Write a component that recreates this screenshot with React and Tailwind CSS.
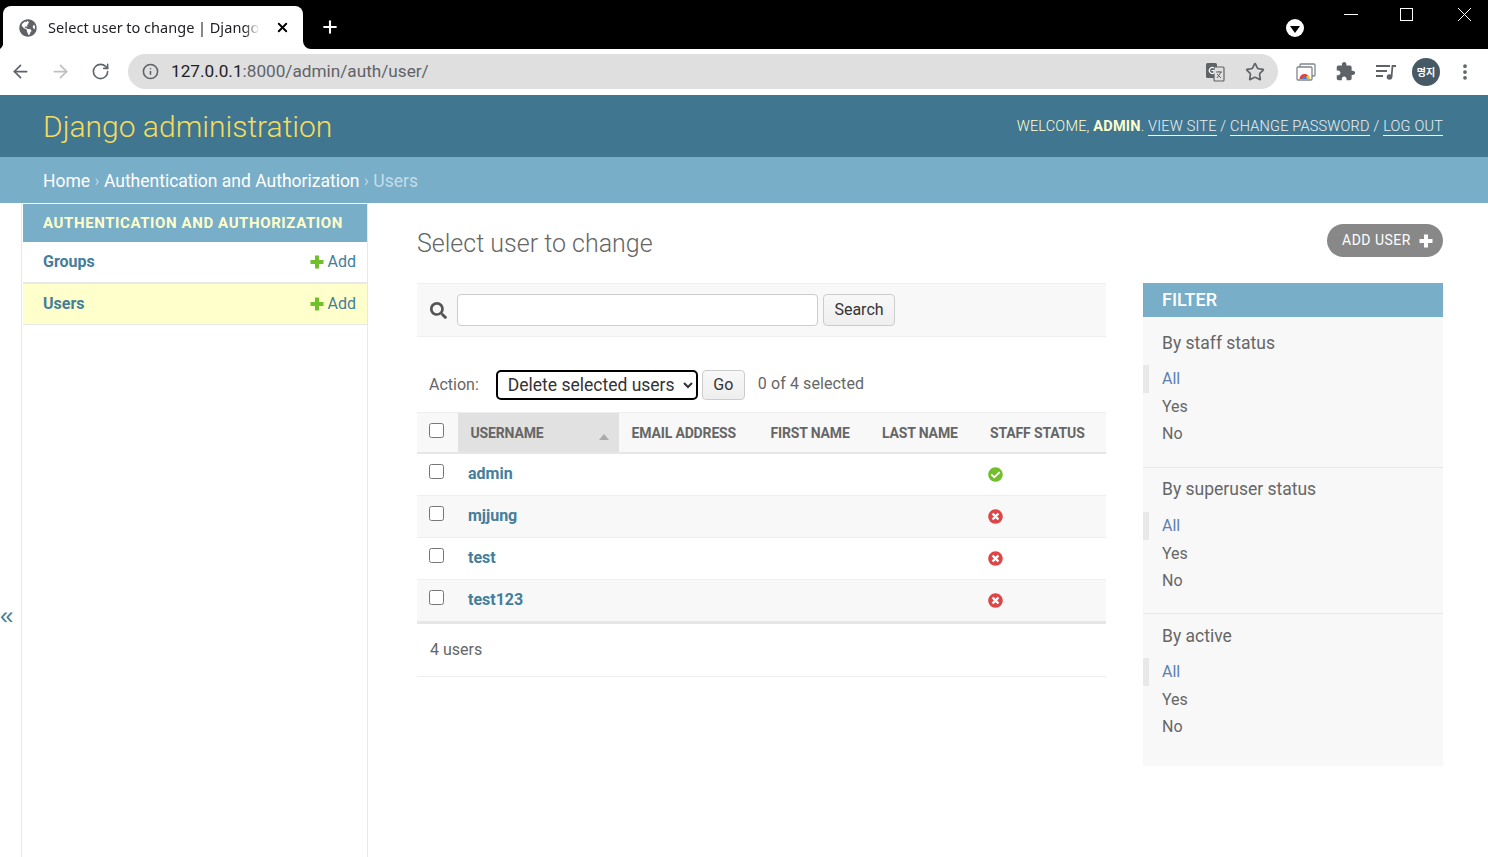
import { ArrowLeft, ArrowRight, RotateCw, Info, Star, EllipsisVertical, X, Plus } from "lucide-react";
import { FaGlobeAmericas, FaSearch, FaCheckCircle, FaTimesCircle } from "react-icons/fa";

const users = [
  { name: "admin", staff: true },
  { name: "mjjung", staff: false },
  { name: "test", staff: false },
  { name: "test123", staff: false },
];

const filters = [
  { title: "By staff status", box: "h-[151px] border-b border-[#e8e8e8]", pt: "pt-[14px]", mt: "mt-[10px]" },
  { title: "By superuser status", box: "h-[146px] border-b border-[#e8e8e8]", pt: "pt-[9px]", mt: "mt-[11px]" },
  { title: "By active", box: "h-[152px]", pt: "pt-[10px]", mt: "mt-[10px]" },
];

function Cross({ className }) {
  return (
    <svg viewBox="0 0 14 14" className={className}>
      <path d="M5 0.500h4V5h4.500v4H9v4.500H5V9H0.500V5H5z" fill="currentColor" />
    </svg>
  );
}

function BrowserBar() {
  return (
    <div className="font-['Noto_Sans','Open_Sans',sans-serif]">
      <div className="h-[49px] bg-black flex items-end pl-[3px]">
        <div className="w-[300px] h-[43px] bg-white rounded-t-lg flex items-center pl-4 pr-[13px] relative">
          <svg viewBox="0 0 3 8" className="absolute right-full bottom-0 w-[3px] h-[8px]"><path d="M3 0A8 8 0 0 1 0 8H3z" fill="#fff" /></svg>
          <svg viewBox="0 0 8 8" className="absolute left-full bottom-0 w-[8px] h-[8px]"><path d="M0 0A8 8 0 0 0 8 8H0z" fill="#fff" /></svg>
          <FaGlobeAmericas className="w-[18px] h-[18px] text-[#5f6368] shrink-0" />
          <span className="ml-[11px] w-[218px] overflow-hidden whitespace-nowrap text-[14.5px] tracking-[0.1px] [word-spacing:-0.4px] text-[#202124] [mask-image:linear-gradient(to_right,black_90%,transparent_97%)]">
            Select user to change | Django site admin
          </span>
          <X className="ml-auto w-[15px] h-[15px] text-black" strokeWidth={3} />
        </div>
        <Plus className="ml-[17px] mb-[12px] w-[20px] h-[20px] text-white" strokeWidth={2.5} />
        <div className="ml-auto self-stretch flex items-start pr-[17px]">
          <div className="mt-[19px] w-[18px] h-[18px] rounded-full bg-white flex items-center justify-center">
            <svg viewBox="0 0 10 7" className="w-[10px] h-[7px] mt-[2px]"><path d="M0 0h10L5 7z" fill="#000" /></svg>
          </div>
          <svg viewBox="0 0 14 1" className="ml-[40px] mt-[14px] w-[14px] h-px"><path d="M0 .5h14" stroke="#fff" /></svg>
          <svg viewBox="0 0 13 13" className="ml-[42px] mt-[8px] w-[13px] h-[13px]"><rect x=".5" y=".5" width="12" height="12" fill="none" stroke="#fff" /></svg>
          <svg viewBox="0 0 13 13" className="ml-[45px] mt-[8px] w-[13px] h-[13px]"><path d="M0 0l13 13M13 0L0 13" stroke="#fff" /></svg>
        </div>
      </div>
      <div className="h-[46px] bg-white flex items-center pb-px">
        <ArrowLeft className="ml-[10px] w-[21px] h-[21px] text-[#5f6368]" strokeWidth={2} />
        <ArrowRight className="ml-[19px] w-[21px] h-[21px] text-[#bdbfc2]" strokeWidth={2} />
        <RotateCw className="ml-[20px] w-[19px] h-[19px] text-[#5f6368]" strokeWidth={2} />
        <div className="ml-[18px] w-[1150px] h-[35px] rounded-full bg-[#dfdfdf] flex items-center pl-[14px] pr-[13px]">
          <Info className="w-[17px] h-[17px] text-[#5f6368]" strokeWidth={2.2} />
          <span className="ml-[12px] text-[17.2px] font-['Roboto',sans-serif] text-[#5f6368]">
            <span className="text-[#202124]">127.0.0.1</span>:8000/admin/auth/user/
          </span>
          <svg viewBox="0 0 20 20" className="ml-auto w-[20px] h-[20px]">
            <rect x="1" y="1" width="11" height="15" rx="1.5" fill="#5f6368" />
            <rect x="9" y="5" width="10" height="14" rx="1" fill="#dfdfdf" stroke="#5f6368" strokeWidth="1.2" />
            <path d="M11 10h6M14 9v1M12 16l4-6M12 12l4 4" stroke="#5f6368" strokeWidth="1" fill="none" />
            <path d="M9 6a3 3 0 1 0 0 5V8.500H6.500" stroke="#fff" strokeWidth="1.200" fill="none" />
          </svg>
          <Star className="ml-[20px] w-[20px] h-[20px] text-[#5f6368]" strokeWidth={2} />
        </div>
        <svg viewBox="0 0 20 20" className="ml-[18px] w-[20px] h-[20px]">
          <rect x="4" y="2" width="15" height="12" rx="1" fill="none" stroke="#80868b" strokeWidth="1.3" />
          <rect x="1" y="5" width="15" height="13" rx="1" fill="#fff" stroke="#80868b" strokeWidth="1.3" />
          <path d="M3.500 17a5 5 0 0 1 10 0z" fill="#e0413a" />
          <path d="M6 17a2.500 2.500 0 0 1 5 0z" fill="#3f83ea" />
          <path d="M11 17a3 3 0 0 0-1-2l2-2a5 5 0 0 1 1.500 4z" fill="#f3c02c" />
        </svg>
        <svg viewBox="0 0 24 24" className="ml-[19px] w-[21px] h-[21px]">
          <path d="M20.500 11H19V7c0-1.100-.9-2-2-2h-4V3.500C13 2.120 11.880 1 10.500 1S8 2.120 8 3.500V5H4c-1.100 0-1.990.9-1.990 2v3.800H3.500c1.490 0 2.700 1.210 2.700 2.700s-1.210 2.700-2.700 2.700H2V20c0 1.100.9 2 2 2h3.800v-1.500c0-1.490 1.210-2.700 2.700-2.700 1.490 0 2.700 1.210 2.700 2.700V22H17c1.100 0 2-.9 2-2v-4h1.500c1.380 0 2.500-1.120 2.500-2.500S21.880 11 20.500 11z" fill="#5f6368" />
        </svg>
        <svg viewBox="0 0 22 18" className="ml-[19px] w-[22px] h-[18px]">
          <path d="M1 3h14M1 8h11M1 13h7" stroke="#5f6368" strokeWidth="1.800" fill="none" />
          <circle cx="14.500" cy="14" r="2.800" fill="#5f6368" />
          <path d="M16.500 14L17.500 3H21" stroke="#5f6368" strokeWidth="1.800" fill="none" />
        </svg>
        <div className="ml-[15px] w-[28px] h-[28px] rounded-full bg-[#455a64] flex items-center justify-center text-[10px] font-bold text-white font-['Noto_Sans_CJK_KR',sans-serif]">
          명지
        </div>
        <EllipsisVertical className="ml-[15px] w-[20px] h-[20px] text-[#5f6368]" strokeWidth={2.5} />
      </div>
    </div>
  );
}

function Sidebar() {
  return (
    <div className="flex shrink-0 self-stretch">
      <div className="w-[22px] border-r border-[#e8e8e8] pt-[401px] text-[#447e9b] text-[24px] leading-[24px]">
        <span className="font-['Liberation_Sans',sans-serif]">«</span>
      </div>
      <div className="w-[346px] border-r border-[#e8e8e8] pt-px pl-px">
        <div className="h-[38px] bg-[#79aec8] pl-5 flex items-center text-[15px] font-bold tracking-[0.6px] text-[#ffffcc]">
          AUTHENTICATION AND AUTHORIZATION
        </div>
        <div className="h-[41px] flex items-center justify-between pl-5 pr-[11px] border-b border-[#e8e8e8] text-[16px]">
          <span className="font-bold text-[#447e9b]">Groups</span>
          <span className="flex items-center gap-[4px] text-[#447e9b]"><Cross className="w-[14px] h-[14px] text-[#70bf2b]" />Add</span>
        </div>
        <div className="h-[42px] flex items-center justify-between pl-5 pr-[11px] border-y border-[#e8e8e8] bg-[#ffffcc] text-[16px]">
          <span className="font-bold text-[#447e9b]">Users</span>
          <span className="flex items-center gap-[4px] text-[#447e9b]"><Cross className="w-[14px] h-[14px] text-[#70bf2b]" />Add</span>
        </div>
      </div>
    </div>
  );
}

function Changelist() {
  return (
    <div className="w-[689px]">
      <div className="h-[54px] bg-[#f8f8f8] border-y border-[#eeeeee] flex items-center pl-[13px]">
        <FaSearch className="w-[17px] h-[17px] text-[#555555]" />
        <input className="ml-[10px] w-[361px] h-[32px] bg-white border border-[#cccccc] rounded" />
        <button className="ml-[5px] h-[32px] w-[72px] bg-gradient-to-b from-[#f8f8f8] to-[#eeeeee] border border-[#cccccc] rounded text-[16px] text-[#333333]">Search</button>
      </div>
      <div className="h-[75px] pt-[21px] flex items-center pl-[12px] text-[16px] text-[#666666]">
        <span>Action:</span>
        <select className="ml-[17px] w-[202px] h-[30px] bg-white border-2 border-black rounded-[5px] pl-[6px] text-[17.5px] text-[#333333]">
          <option>Delete selected users</option>
        </select>
        <button className="ml-[4px] h-[30px] w-[43px] bg-gradient-to-b from-[#f8f8f8] to-[#eeeeee] border border-[#cccccc] rounded text-[16px] text-[#333333]">Go</button>
        <span className="ml-[13px] mt-[-2px] tracking-[0.1px]">0 of 4 selected</span>
      </div>
      <div className="h-[42px] bg-[#f8f8f8] border-t border-[#eeeeee] border-b-2 border-b-[#e6e6e6] flex items-stretch text-[14px] font-bold tracking-[-0.15px] text-[#666666]">
        <div className="w-[41px] pl-[12px] pt-[10px]"><input type="checkbox" className="block w-[15px] h-[15px]" /></div>
        <div className="w-[161px] bg-[#e1e1e1] pl-[12.500px] pr-[9px] pt-[2px] flex items-center justify-between">
          USERNAME
          <svg viewBox="0 0 10 6" className="w-[12px] h-[6px] mt-[6px]"><path d="M5 0l5 6H0z" fill="#aaaaaa" /></svg>
        </div>
        <div className="w-[139px] pl-[12.500px] pt-[2px] flex items-center">EMAIL ADDRESS</div>
        <div className="w-[112px] pl-[12.500px] pt-[2px] flex items-center">FIRST NAME</div>
        <div className="w-[108px] pl-[12px] pt-[2px] flex items-center">LAST NAME</div>
        <div className="flex-1 pl-[12px] pt-[2px] flex items-center">STAFF STATUS</div>
      </div>
      {users.map((u, i) => (
        <div key={u.name} className={`h-[42px] flex items-stretch border-b border-[#eeeeee] ${i % 2 ? "bg-[#f8f8f8]" : "bg-white"}`}>
          <div className="w-[41px] pl-[12px] pt-[10px]"><input type="checkbox" className="block w-[15px] h-[15px]" /></div>
          <div className="w-[530px] pl-[10px] pb-[2px] flex items-center text-[16px] font-bold text-[#447e9b]">{u.name}</div>
          <div className="flex-1 flex items-center">
            {u.staff
              ? <FaCheckCircle className="w-[15px] h-[15px] text-[#70bf2b]" />
              : <FaTimesCircle className="w-[15px] h-[15px] text-[#dd4646]" />}
          </div>
        </div>
      ))}
      <div className="h-[55px] mt-[-1px] border-t-[3px] border-[#e6e6e6] flex items-center pl-[13px] text-[16px] text-[#666666]">4 users</div>
      <div className="border-b border-[#eeeeee]" />
    </div>
  );
}

function FilterPanel() {
  return (
    <div className="w-[300px] bg-[#f8f8f8] self-start">
      <div className="h-[34px] bg-[#79aec8] pl-[19px] pb-px flex items-center text-[18px] font-medium text-white">FILTER</div>
      {filters.map((f) => (
        <div key={f.title} className={f.box}>
          <div className={`pl-[19px] ${f.pt} text-[17.500px] leading-[24px] text-[#666666]`}>{f.title}</div>
          <div className={`${f.mt} text-[16px] text-[#666666]`}>
            <div className="h-[28px] border-l-[6px] border-[#e8e8e8] pl-[13px] flex items-center text-[#5b80b2]">All</div>
            <div className="h-[27px] pl-[19px] flex items-center">Yes</div>
            <div className="h-[28px] pl-[19px] flex items-center">No</div>
          </div>
        </div>
      ))}
    </div>
  );
}

export default function App() {
  return (
    <div className="w-[1488px] h-[857px] overflow-hidden bg-white flex flex-col font-['Roboto',sans-serif]">
      <BrowserBar />
      <div className="h-[62px] bg-[#417690] flex items-center justify-between pl-[43px] pr-[45px] shrink-0">
        <div className="text-[30px] font-light text-[#f5dd5d]">Django administration</div>
        <div className="pt-[2px] text-[14.5px] font-light tracking-[0.2px] text-[#ffffcc]">
          WELCOME, <span className="font-bold">ADMIN</span>.{" "}
          <span className="text-white/90"><span className="border-b border-[#ffffcc]">VIEW SITE</span> / <span className="border-b border-[#ffffcc]">CHANGE PASSWORD</span> / <span className="border-b border-[#ffffcc]">LOG OUT</span></span>
        </div>
      </div>
      <div className="h-[46px] bg-[#79aec8] flex items-center pl-[43px] pt-[2px] text-[17.500px] text-white shrink-0">
        <span>Home</span>
        <span className="text-[#c4dce8] mx-[4.500px] text-[16px]">›</span>
        <span>Authentication and Authorization</span>
        <span className="text-[#c4dce8] mx-[4.500px] text-[16px]">›</span>
        <span className="text-[#c4dce8]">Users</span>
      </div>
      <div className="flex-1 flex">
        <Sidebar />
        <div className="flex-1 pl-[49px] pr-[45px]">
          <div className="h-[80px] flex justify-between items-start">
            <h1 className="mt-[25px] text-[25px] leading-[32px] font-light text-[#666666]">Select user to change</h1>
            <div className="mt-[21px] h-[33px] w-[116px] pl-[15px] rounded-full bg-[#888888] flex items-center gap-[8px] text-[14px] font-normal tracking-[0.5px] text-white">
              ADD USER
              <Cross className="w-[14px] h-[14px]" />
            </div>
          </div>
          <div className="flex gap-[37px]">
            <Changelist />
            <FilterPanel />
          </div>
        </div>
      </div>
    </div>
  );
}
